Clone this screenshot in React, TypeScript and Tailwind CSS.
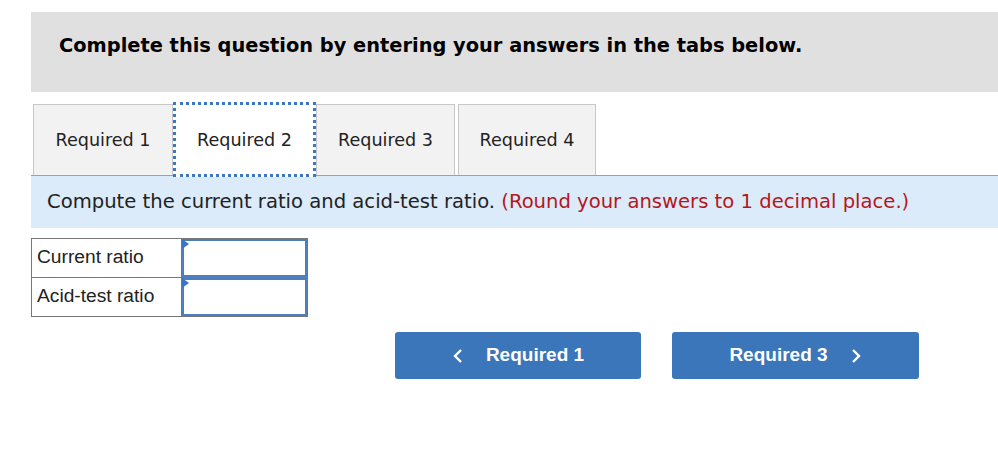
import React from "react";

const tabs = ["Required 1", "Required 2", "Required 3", "Required 4"];
const rows = ["Current ratio", "Acid-test ratio"];

const AnswerCell = () => (
  <div className="relative h-full border-2 border-[#4b7fc0] bg-white">
    <div className="absolute -left-[2px] -top-[2px] h-0 w-0 border-y-[5px] border-l-[7px] border-y-transparent border-l-[#3a76c4]" />
  </div>
);

export default function App() {
  return (
    <div className="min-h-[458px] bg-white pl-[31px] pt-[12px]">
      <div className="h-[80px] bg-[#e0e0e0] pl-[28px] pt-[24px]">
        <h2 className="text-[19.4px] font-bold leading-none text-black [font-family:'DejaVu_Sans',sans-serif]">
          Complete this question by entering your answers in the tabs below.
        </h2>
      </div>

      <div className="mt-[9px] flex h-[74px] items-end pl-[2px] [font-family:'DejaVu_Sans',sans-serif] text-[17.6px] text-[#222]">
        {tabs.map((t, i) =>
          i === 1 ? (
            <div
              key={t}
              className="relative z-10 -mb-[2px] flex h-[75px] w-[143px] items-center justify-center border-[3px] border-dotted border-[#3b78c4] bg-white pt-[1px]"
            >
              {t}
            </div>
          ) : (
            <div
              key={t}
              className={`flex h-[71px] items-center justify-center border border-b-0 border-[#c8c8c8] bg-[#f2f2f2] ${
                i === 0 ? "w-[140px]" : i === 2 ? "w-[139px]" : "ml-[3px] w-[138px]"
              }`}
            >
              {t}
            </div>
          )
        )}
      </div>

      <div className="flex h-[53px] items-center border-t border-[#a0a0a0] bg-[#dbebf9] pl-[16px] text-[19.6px] [font-family:'DejaVu_Sans',sans-serif] text-[#222]">
        <span>
          Compute the current ratio and acid-test ratio.{" "}
          <span className="text-[#b5171d]">(Round your answers to 1 decimal place.)</span>
        </span>
      </div>

      <table className="mt-[10px] border-collapse [font-family:'Liberation_Sans',Arial,sans-serif] text-[19.2px] text-[#222]">
        <tbody>
          {rows.map((r) => (
            <tr key={r} className="h-[39px]">
              <td className="w-[150px] border border-[#777] px-[5px] pb-[2px] leading-none">{r}</td>
              <td className="w-[126px] border border-[#777] p-0 h-[39px]">
                <AnswerCell />
              </td>
            </tr>
          ))}
        </tbody>
      </table>

      <div className="mt-[15px] flex gap-[31px] pl-[364px] [font-family:'Liberation_Sans',Arial,sans-serif] text-[19px] font-bold text-white">
        <button className="flex h-[47px] w-[246px] items-center justify-center rounded-[3px] bg-[#3a76b9]">
          <svg width="12" height="16" viewBox="0 0 12 16" className="mr-[22px]">
            <path d="M9 2 L3 8 L9 14" fill="none" stroke="white" strokeWidth="2.4" />
          </svg>
          Required 1
        </button>
        <button className="flex h-[47px] w-[247px] items-center justify-center rounded-[3px] bg-[#3a76b9]">
          Required 3
          <svg width="12" height="16" viewBox="0 0 12 16" className="ml-[22px]">
            <path d="M3 2 L9 8 L3 14" fill="none" stroke="white" strokeWidth="2.4" />
          </svg>
        </button>
      </div>
    </div>
  );
}
